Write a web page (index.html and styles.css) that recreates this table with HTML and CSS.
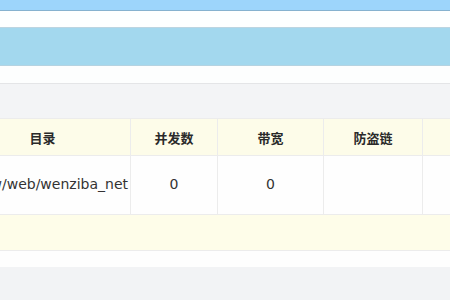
FILE: index.html
```html
<!DOCTYPE html>
<html lang="zh-CN">
<head>
    <meta charset="UTF-8">
    <meta name="viewport" content="width=device-width, initial-scale=1.0">
    <title>网站列表</title>
    <link rel="stylesheet" href="styles.css">
</head>
<body>

    <!-- Top bars -->
    <div class="topbar"></div>
    <div class="subbar"></div>
    <div class="titlebar"></div>
    <div class="gap"></div>

    <!-- Site list -->
    <div class="panel">
        <div class="toolbar"></div>
        <table class="site-table">
            <colgroup>
                <col class="col-path">
                <col class="col-conn">
                <col class="col-bw">
                <col class="col-leech">
                <col class="col-more">
            </colgroup>
            <thead>
                <tr>
                    <th>目录</th>
                    <th>并发数</th>
                    <th>带宽</th>
                    <th>防盗链</th>
                    <th>操作</th>
                </tr>
            </thead>
            <tbody>
                <tr class="site-row">
                    <td class="path">/www/web/wenziba_net</td>
                    <td>0</td>
                    <td>0</td>
                    <td></td>
                    <td></td>
                </tr>
                <tr class="pager">
                    <td colspan="5"></td>
                </tr>
            </tbody>
        </table>
        <div class="panel-foot"></div>
    </div>

</body>
</html>
```

FILE: styles.css
```css
/* General Styles */
body {
    margin: 0;
    padding: 0;
    background: #f2f3f5;
    font-family: "DejaVu Sans", "Noto Sans CJK SC", sans-serif;
    font-size: 14px;
    color: #444;
    overflow: hidden;
}

/* Header bars */
.topbar {
    height: 10px;
    background: #9dd5fb;
    border-bottom: 1px solid #86b2cf;
    box-shadow: 0 1px 0 #dcf3fc;
}

.subbar {
    height: 16px;
    background: #fdffff;
}

.titlebar {
    height: 37px;
    background: #a3d8ee;
    border-top: 1px solid #bcd5e1;
    border-bottom: 1px solid #b5d3e1;
}

.gap {
    height: 17px;
    background: #fdfefe;
}

/* Panel */
.panel {
    background: #fefefe;
}

.toolbar {
    height: 34px;
    background: #f3f4f6;
    border-top: 1px solid #e4e5e7;
}

.site-table {
    width: 554px;
    margin-left: -46px;
    border-collapse: collapse;
    table-layout: fixed;
}

.col-path { width: 176px; }
.col-conn { width: 87px; }
.col-bw { width: 106px; }
.col-leech { width: 99px; }
.col-more { width: 86px; }

th, td {
    border: 1px solid #ececec;
    text-align: center;
    padding: 0;
    white-space: nowrap;
    overflow: hidden;
}

th {
    height: 36px;
    background: #fdfce9;
    color: #2a2a2a;
    font-weight: 600;
    font-size: 13px;
}

.site-row td {
    height: 56px;
    background: #fefefe;
    color: #333;
    padding-bottom: 2px;
}

.site-row .path {
    text-align: right;
    padding-right: 2px;
}

.pager td {
    height: 35px;
    background: #fefde9;
    border-left: none;
    border-right: none;
}

.panel-foot {
    height: 16px;
    background: #fefefe;
}
```
